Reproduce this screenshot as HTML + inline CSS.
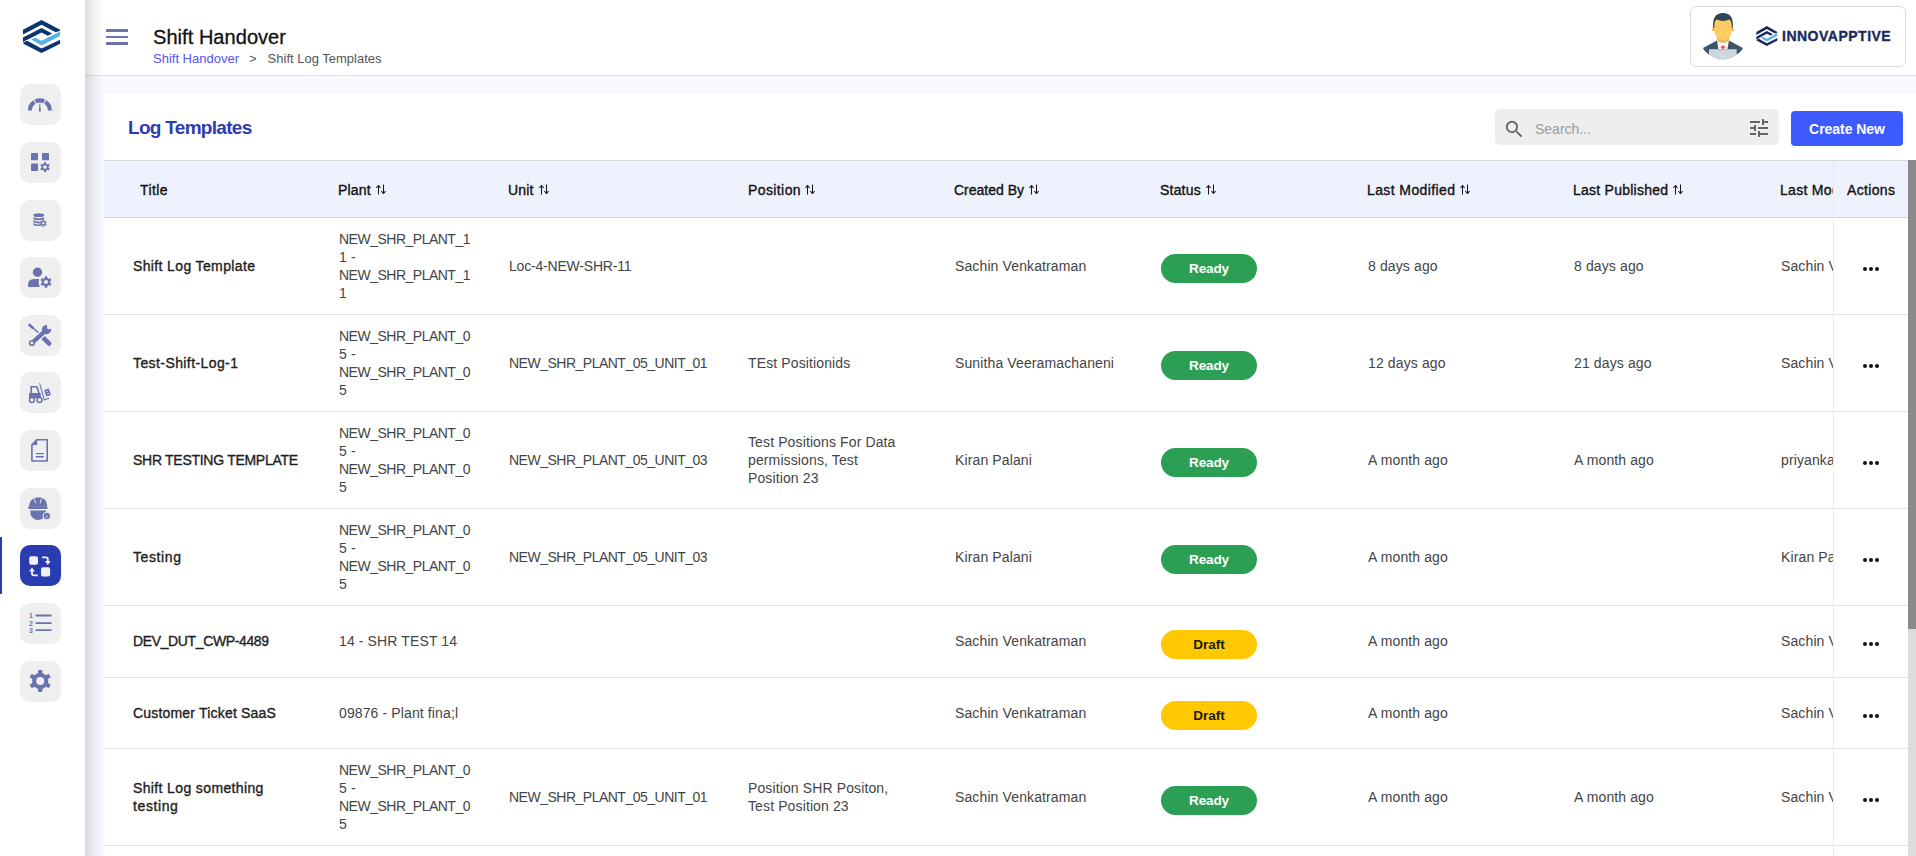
<!DOCTYPE html>
<html><head><meta charset="utf-8">
<style>
*{box-sizing:border-box;margin:0;padding:0}
html,body{width:1916px;height:856px;overflow:hidden;background:#fff;font-family:"Liberation Sans",sans-serif;}
.abs{position:absolute}
#side{position:absolute;left:0;top:0;width:85px;height:856px;background:#fff;z-index:5}
.tile{position:absolute;left:20px;width:41px;height:41px;border-radius:10px;background:#efefef}
.tile svg{position:absolute;left:0;top:0;width:41px;height:41px}
.tile.act{background:#293db0}
#actbar{position:absolute;left:0;top:537px;width:2px;height:57px;background:#293db0}
#shadow{position:absolute;left:85px;top:0;width:19px;height:856px;background:linear-gradient(to right,rgba(40,40,70,0.16),rgba(40,40,70,0.07) 40%,rgba(40,40,70,0.015) 85%,rgba(40,40,70,0));z-index:4}
#hdr{position:absolute;left:85px;top:0;width:1831px;height:76px;background:#fff;border-bottom:1px solid #dedede}
#content{position:absolute;left:85px;top:76px;width:1831px;height:780px;background:#f8f9fe}
#card{position:absolute;left:104px;top:94px;width:1812px;height:762px;background:#fff}
.ham{position:absolute;left:106px;width:22px;height:2.6px;background:#6d73a8;border-radius:0.5px}
#title{position:absolute;left:153px;top:25px;font-size:20px;line-height:24px;color:#111;white-space:nowrap;-webkit-text-stroke:0.3px #111;letter-spacing:0.05px}
#bc{position:absolute;left:153px;top:51px;font-size:13px;line-height:16px;color:#555;white-space:nowrap}
#bc a{color:#5155ee;text-decoration:none}
#userbox{position:absolute;left:1690px;top:6px;width:216px;height:61px;border:1px solid #dcdcdc;border-radius:6px;background:#fff}
#brand{position:absolute;left:1782px;top:28px;font-size:14px;line-height:16px;font-weight:700;color:#1b2a5c;white-space:nowrap;letter-spacing:0.5px;-webkit-text-stroke:0.35px #1b2a5c}
#lt{position:absolute;left:128px;top:116.5px;font-size:19px;line-height:22px;font-weight:700;color:#2c3db2;white-space:nowrap;letter-spacing:-0.7px}
#search{position:absolute;left:1495px;top:109px;width:284px;height:36px;background:#eeeeee;border-radius:5px}
#search .ph{position:absolute;left:40px;top:12px;font-size:14px;line-height:16px;color:#9a9a9a}
#btn{position:absolute;left:1791px;top:111px;width:112px;height:35px;background:#3d5afe;border-radius:4px;color:#fff;font-size:14px;font-weight:700;line-height:37px;text-align:center;letter-spacing:-0.05px}
#thead{position:absolute;left:104px;top:160px;width:1804px;height:58px;background:#eef2fe;border-top:1px solid #d8d8d8;border-bottom:1px solid #d2d5e0}
.h{position:absolute;top:182px;font-size:14px;line-height:16px;font-weight:400;color:#111;white-space:nowrap;letter-spacing:0.3px;-webkit-text-stroke:0.35px #111}
.h svg{display:inline-block;vertical-align:top;margin-left:4px;margin-top:3px}
.rowline{position:absolute;left:104px;width:1804px;height:1px;background:#e2e2e2}
.c{position:absolute;font-size:14px;line-height:18px;white-space:nowrap}
.c.t{font-weight:400;color:#1e1e1e;-webkit-text-stroke:0.35px #1e1e1e}
.c.d{color:#444;letter-spacing:0.12px}
.ns{letter-spacing:-0.5px}
.clip{width:52px;overflow:hidden}
#actcol{position:absolute;left:1833px;top:160px;width:75px;height:696px;background:transparent;z-index:2}
#vline{position:absolute;left:1833px;top:161px;width:1px;height:695px;background:#eaeaea;z-index:3}
.pill{position:absolute;left:1161px;width:96px;height:29px;border-radius:15px;font-size:13.5px;font-weight:700;line-height:29px;text-align:center}
.ready{background:#2ba055;color:#fff;letter-spacing:-0.15px}
.draft{background:#ffc800;color:#1a1a1a;letter-spacing:0px}
.dots{position:absolute;left:1863px;width:16px;height:4px;z-index:3}
.dots i{position:absolute;top:0;width:4px;height:4px;border-radius:2px;background:#111}
.dots i:nth-child(1){left:0}
.dots i:nth-child(2){left:6px}
.dots i:nth-child(3){left:12px}
#sbtrack{position:absolute;left:1908px;top:160px;width:8px;height:696px;background:#dcdcdc;z-index:6}
#sbthumb{position:absolute;left:1908px;top:160px;width:8px;height:469px;background:#8a8a8a;z-index:7}
</style></head><body>

<div id="hdr"></div>
<div id="content"></div>
<div id="card"></div>

<!-- sidebar -->
<div id="side">
  <svg class="abs" style="left:10px;top:10px" width="60" height="60" viewBox="0 0 856 856">
    <polygon fill="#0b3470" points="185,282 450,143 715,280 715,296 652,318 450,210 185,350"/>
    <polygon fill="#0b3470" points="185,392 450,258 600,336 540,366 450,320 185,456"/>
    <polygon fill="#5ab1e6" points="300,422 360,395 450,440 715,305 715,370 450,505"/>
    <polygon fill="#0b3470" points="190,462 245,440 450,548 715,425 715,482 450,612 190,480"/>
  </svg>
  <div class="tile" style="top:84px"><svg viewBox="0 0 41 41"><g fill="#6b72b0">
    <path d="M7.9 26.4 A12 12 0 0 1 13.4 16.3 L15.6 19.7 A8 8 0 0 0 11.9 26.4Z"/>
    <path d="M14.4 15.7 A12 12 0 0 1 25.3 15.7 L23.2 19.2 A8 8 0 0 0 16.5 19.2Z"/>
    <path d="M26.3 16.3 A12 12 0 0 1 31.9 26.4 L27.9 26.4 A8 8 0 0 0 24.1 19.7Z"/>
    <path d="M19.55 19.6 L20.15 19.6 L20.85 26.7 A1 1 0 0 1 18.85 26.7Z"/></g></svg></div>
  <div class="tile" style="top:142px"><svg viewBox="0 0 41 41"><g fill="#6b72b0">
    <rect x="11" y="11" width="7" height="7.2" rx="0.6"/><rect x="22" y="11" width="7" height="7.2" rx="0.6"/><rect x="11" y="21.6" width="7" height="7.3" rx="0.6"/>
    <path fill-rule="evenodd" d="M23.97 21.55 L23.96 20.21 L26.04 20.21 L26.03 21.55 L27.56 22.43 L28.72 21.75 L29.76 23.55 L28.59 24.22 L28.59 25.98 L29.76 26.65 L28.72 28.45 L27.56 27.77 L26.03 28.65 L26.04 29.99 L23.96 29.99 L23.97 28.65 L22.44 27.77 L21.28 28.45 L20.24 26.65 L21.41 25.98 L21.41 24.22 L20.24 23.55 L21.28 21.75 L22.44 22.43Z M26.80 25.10 A1.8 1.8 0 1 0 23.20 25.10 A1.8 1.8 0 1 0 26.80 25.10Z"/></g></svg></div>
  <div class="tile" style="top:200px"><svg viewBox="0 0 41 41"><g fill="#6b72b0">
    <ellipse cx="18.8" cy="15.2" rx="5.4" ry="1.9"/>
    <path d="M13.4 17.3 Q18.8 19.6 24.2 17.3 L24.2 19.2 Q18.8 21.5 13.4 19.2Z"/>
    <path d="M13.4 20.3 Q18.8 22.5 21.5 21.5 L21 23.3 Q16 23.8 13.4 22.3Z"/>
    <path d="M13.4 23.3 Q16.5 24.8 20.5 24.4 L21 25.9 Q16 26.3 13.4 25.2Z"/>
    <path fill-rule="evenodd" d="M22.57 20.80 L22.55 19.78 L24.05 19.78 L24.03 20.80 L25.10 21.42 L25.98 20.89 L26.72 22.19 L25.82 22.68 L25.82 23.92 L26.72 24.41 L25.98 25.71 L25.10 25.18 L24.03 25.80 L24.05 26.82 L22.55 26.82 L22.57 25.80 L21.50 25.18 L20.62 25.71 L19.88 24.41 L20.78 23.92 L20.78 22.68 L19.88 22.19 L20.62 20.89 L21.50 21.42Z M24.50 23.30 A1.2 1.2 0 1 0 22.10 23.30 A1.2 1.2 0 1 0 24.50 23.30Z"/></g></svg></div>
  <div class="tile" style="top:257px"><svg viewBox="0 0 41 41"><g fill="#6b72b0">
    <circle cx="17.5" cy="15.3" r="4.7"/>
    <path d="M8.1 30 L8.1 27 Q8.1 22.2 14 21.9 L19 21.9 Q18 25.5 19.6 30Z"/>
    <path fill-rule="evenodd" d="M24.80 20.87 L24.79 19.33 L27.21 19.33 L27.20 20.87 L28.98 21.90 L30.31 21.12 L31.52 23.21 L30.18 23.97 L30.18 26.03 L31.52 26.79 L30.31 28.88 L28.98 28.10 L27.20 29.13 L27.21 30.67 L24.79 30.67 L24.80 29.13 L23.02 28.10 L21.69 28.88 L20.48 26.79 L21.82 26.03 L21.82 23.97 L20.48 23.21 L21.69 21.12 L23.02 21.90Z M28.00 25.00 A2 2 0 1 0 24.00 25.00 A2 2 0 1 0 28.00 25.00Z"/></g></svg></div>
  <div class="tile" style="top:315px"><svg viewBox="0 0 41 41">
    <g stroke="#6b72b0" stroke-linecap="round" fill="none">
      <path d="M9.6 10 L18.6 17.9" stroke-width="1.4"/>
      <path d="M9.4 9.8 L12.6 12.7" stroke-width="2.5"/>
      <path d="M22.6 22.1 L29.2 28.7" stroke-width="4.6"/>
    </g>
    <path d="M11.9 28 L25.6 15.6" stroke="#efefef" stroke-width="7" stroke-linecap="butt"/>
    <path d="M11.9 28 L25.6 15.6" stroke="#6b72b0" stroke-width="4.2" stroke-linecap="round"/>
    <circle cx="26.6" cy="14.6" r="4.6" fill="#6b72b0"/>
    <path d="M27 9 L32 9 L32 14 Z M25.8 10 L31.4 15.6 L29.3 13.5 Z" fill="#efefef"/>
    <path d="M26.2 8.6 L28.2 8.6 L28.6 12.1 L32.4 12.1 L32.4 14.2 L31.3 14.2 L28.9 12.9 L27.4 11.5 Z" fill="#efefef"/>
    <circle cx="28.9" cy="12.4" r="1.9" fill="#efefef"/>
    <circle cx="11.9" cy="28" r="3.1" fill="#6b72b0"/>
    <circle cx="11.9" cy="28" r="1.45" fill="#efefef"/>
  </svg></div>
  <div class="tile" style="top:372px"><svg viewBox="0 0 41 41">
    <g fill="#6b72b0">
    <path fill-rule="evenodd" d="M10.4 14 L17.4 14 L20 21.2 L20.8 21.2 L20.8 26.3 L9 26.3 L9 21 L10.4 21 Z M12.1 15.6 L12.1 21 L18.2 21 L16.2 15.6 Z"/>
    <path d="M19.1 11.2 L20.1 10.9 L24.7 27.2 L28.8 25.7 L29.2 26.8 L24.2 28.6 L23.8 28.3 Z"/>
    <path d="M24.2 18.1 L28.9 16.6 L30.9 23 L26.2 24.5 Z"/>
    </g>
    <path d="M26.2 19.6 L28.3 18.9 M27 22 L29.1 21.3" stroke="#efefef" stroke-width="0.7"/>
    <circle cx="11.9" cy="28" r="2.5" fill="#efefef" stroke="#6b72b0" stroke-width="1.4"/>
    <circle cx="19.5" cy="28" r="2.5" fill="#efefef" stroke="#6b72b0" stroke-width="1.4"/>
  </svg></div>
  <div class="tile" style="top:430px"><svg viewBox="0 0 41 41"><g fill="#6b72b0">
    <path fill-rule="evenodd" d="M16.5 9 L27.2 9 Q28 9 28 9.8 L28 31 Q28 31.8 27.2 31.8 L11.9 31.8 Q11.1 31.8 11.1 31 L11.1 14.4Z M17.1 10.6 L17.1 15 L12.7 15 L12.7 30.2 L26.4 30.2 L26.4 10.6Z"/>
    <rect x="15.7" y="22.9" width="8.2" height="1.4" rx="0.6"/><rect x="15.7" y="26.1" width="8.2" height="1.4" rx="0.6"/></g></svg></div>
  <div class="tile" style="top:488px"><svg viewBox="0 0 41 41">
    <g fill="#6b72b0">
    <path d="M9 18.6 Q9.6 11 15.3 9.9 L15.8 9.6 L21 9.6 L21.5 9.9 Q27 11 27.2 18.6 Z"/>
    <rect x="8.1" y="18.2" width="19.5" height="2.9" rx="1.4"/>
    <path d="M10.2 22.6 L26 22.6 Q26 31.9 18 31.9 Q10.2 31.9 10.2 22.6 Z"/>
    </g>
    <path d="M14.4 10.8 L15.6 15.4 M21.2 10.8 L20.2 15.4" stroke="#efefef" stroke-width="0.9"/>
    <circle cx="26.8" cy="28" r="3.8" fill="#6b72b0" stroke="#efefef" stroke-width="1"/>
    <path d="M25.6 29.3 L28 26.8 L26.6 29.9 Z" fill="#efefef"/>
  </svg></div>
  <div id="actbar"></div>
  <div class="tile act" style="top:545px"><svg viewBox="0 0 41 41">
    <g fill="#f1f1f3">
    <rect x="9.2" y="11.3" width="8.8" height="8.5" rx="2"/>
    <rect x="21" y="22.3" width="9.1" height="9.1" rx="2"/>
    <path d="M24.9 16 L30.7 16 L27.8 19.9Z"/>
    <path d="M9.1 26.4 L14.9 26.4 L12 22.5Z"/>
    </g>
    <g fill="none" stroke="#f1f1f3" stroke-width="1.9">
    <path d="M22 12.4 H26 Q27.8 12.4 27.8 14.2 V16.5"/>
    <path d="M17.8 30.4 H13.8 Q12 30.4 12 28.6 V26"/>
    </g></svg></div>
  <div class="tile" style="top:603px"><svg viewBox="0 0 41 41"><g fill="#6b72b0">
    <rect x="15.4" y="11.6" width="16.4" height="1.8" rx="0.9"/>
    <rect x="15.4" y="19.2" width="16.4" height="1.8" rx="0.9"/>
    <rect x="15.4" y="26.2" width="16.4" height="1.8" rx="0.9"/>
    <text x="8.9" y="15" font-family="Liberation Sans" font-weight="700" font-size="7">1</text>
    <text x="8.9" y="22.5" font-family="Liberation Sans" font-weight="700" font-size="7">2</text>
    <text x="8.9" y="29.9" font-family="Liberation Sans" font-weight="700" font-size="7">3</text></g></svg></div>
  <div class="tile" style="top:661px"><svg viewBox="0 0 41 41"><g fill="#6b72b0">
    <path fill-rule="evenodd" d="M18.11 11.97 L18.10 9.00 L22.30 9.00 L22.29 11.97 L26.11 14.17 L28.68 12.68 L30.78 16.32 L28.20 17.79 L28.20 22.21 L30.78 23.68 L28.68 27.32 L26.11 25.83 L22.29 28.03 L22.30 31.00 L18.10 31.00 L18.11 28.03 L14.29 25.83 L11.72 27.32 L9.62 23.68 L12.20 22.21 L12.20 17.79 L9.62 16.32 L11.72 12.68 L14.29 14.17Z M24.20 20.00 A4 4 0 1 0 16.20 20.00 A4 4 0 1 0 24.20 20.00Z"/></g></svg></div>
</div>
<div id="shadow"></div>

<!-- header -->
<div class="ham" style="top:29px"></div>
<div class="ham" style="top:35.6px"></div>
<div class="ham" style="top:42.2px"></div>
<div id="title">Shift Handover</div>
<div id="bc"><a>Shift Handover</a><span style="margin:0 11px 0 10px">&gt;</span>Shift Log Templates</div>
<div id="userbox"></div>
<svg class="abs" style="left:1700px;top:10px" width="46" height="52" viewBox="0 0 46 52">
  <path d="M3.0 38.1 L17.0 30.6 L28.9 30.6 L42.9 38.1 A20.5 12.5 0 0 1 3.0 38.1 Z" fill="#3e5568"/>
  <path d="M9.0 39.3 L36.7 39.3 L36.7 44.5 Q31.0 49.8 22.8 49.8 Q14.5 49.8 9.0 44.5 Z" fill="#cdd5df"/>
  <circle cx="22.90000000000009" cy="46.6" r="1.4" fill="#e3e8ee"/>
  <path d="M17.0 30.6 L28.9 30.6 L27.5 39.3 L18.4 39.3 Z" fill="#f4f4f6"/>
  <rect x="17" y="25" width="11.9" height="5.6" fill="#f0b441"/>
  <path d="M17.0 30.6 Q22.9 35.0 28.9 30.6 Z" fill="#f0b441"/>
  <path d="M21.4 35.8 L24.4 35.8 L25.0 37.8 L22.9 39.3 L20.8 37.8 Z" fill="#ee5a4f"/>
  <circle cx="13.599999999999909" cy="19.6" r="1.7" fill="#f0b441"/>
  <circle cx="32.40000000000009" cy="19.6" r="1.7" fill="#f0b441"/>
  <path d="M14.0 7.0 L14.0 19.0 Q14.8 30.4 23.0 30.4 Q31.2 30.4 32.0 19.0 L32.0 7.0 Z" fill="#fccb62"/>
  <path d="M13.1 18.0 Q12.0 3.1 23.0 3.1 Q34.0 3.1 32.8 18.0 L31.8 18.0 Q31.6 11.0 29.5 9.6 Q23.0 12.3 16.5 9.6 Q14.4 11.0 14.2 18.0 Z" fill="#2e4657"/>
</svg>
<svg class="abs" style="left:1748.7px;top:19.9px" width="34" height="36.5" viewBox="0 0 856 856" preserveAspectRatio="none">
  <polygon fill="#16295a" points="185,282 450,143 715,280 715,296 652,318 450,210 185,350"/>
  <polygon fill="#16295a" points="185,392 450,258 600,336 540,366 450,320 185,456"/>
  <polygon fill="#5ab1e6" points="300,422 360,395 450,440 715,305 715,370 450,505"/>
  <polygon fill="#16295a" points="190,462 245,440 450,548 715,425 715,482 450,612 190,480"/>
</svg>
<div id="brand">INNOVAPPTIVE</div>

<!-- card header -->
<div id="lt">Log Templates</div>
<div id="search">
  <svg class="abs" style="left:7.7px;top:9.2px" width="22.6" height="22.6" viewBox="0 0 24 24"><path fill="#666" d="M15.5 14h-.79l-.28-.27A6.47 6.47 0 0 0 16 9.5 6.5 6.5 0 1 0 9.5 16c1.61 0 3.09-.59 4.23-1.57l.27.28v.79l5 4.99L20.49 19l-4.99-5zm-6 0C7.01 14 5 11.99 5 9.5S7.01 5 9.5 5 14 7.01 14 9.5 11.99 14 9.5 14z"/></svg>
  <div class="ph">Search...</div>
  <svg class="abs" style="left:252px;top:7px" width="24" height="24" viewBox="0 0 24 24"><path fill="#666" d="M3 17v2h6v-2H3zM3 5v2h10V5H3zm10 16v-2h8v-2h-8v-2h-2v6h2zM7 9v2H3v2h4v2h2V9H7zm14 4v-2H11v2h10zm-6-4h2V7h4V5h-4V3h-2v6z"/></svg>
</div>
<div id="btn">Create New</div>

<!-- table -->
<div id="thead"></div>
<div class="h" style="left:140px;letter-spacing:0.4px">Title</div>
<div class="h" style="left:338px;letter-spacing:0.2px">Plant</div>
<div class="h" style="left:508px;letter-spacing:0.2px">Unit</div>
<div class="h" style="left:748px;letter-spacing:0.4px">Position</div>
<div class="h" style="left:954px;letter-spacing:0.0px">Created By</div>
<div class="h" style="left:1160px;letter-spacing:0.2px">Status</div>
<div class="h" style="left:1367px;letter-spacing:0.4px">Last Modified</div>
<div class="h" style="left:1573px;letter-spacing:0.25px">Last Published</div>
<div class="h" style="left:1780px;width:53px;overflow:hidden">Last Modified By</div>
<div class="h" style="left:1847px;letter-spacing:0.35px">Actions</div>
<svg class="abs" style="left:376px;top:183.5px" width="10" height="11" viewBox="0 0 10 11"><path d="M2.5 10.5V1.6M0.4 3.8L2.5 1.5 4.6 3.8M7.5 0.5V9.4M5.4 7.2L7.5 9.5 9.6 7.2" fill="none" stroke="#1a1a1a" stroke-width="1.05"/></svg>
<svg class="abs" style="left:539px;top:183.5px" width="10" height="11" viewBox="0 0 10 11"><path d="M2.5 10.5V1.6M0.4 3.8L2.5 1.5 4.6 3.8M7.5 0.5V9.4M5.4 7.2L7.5 9.5 9.6 7.2" fill="none" stroke="#1a1a1a" stroke-width="1.05"/></svg>
<svg class="abs" style="left:805px;top:183.5px" width="10" height="11" viewBox="0 0 10 11"><path d="M2.5 10.5V1.6M0.4 3.8L2.5 1.5 4.6 3.8M7.5 0.5V9.4M5.4 7.2L7.5 9.5 9.6 7.2" fill="none" stroke="#1a1a1a" stroke-width="1.05"/></svg>
<svg class="abs" style="left:1029px;top:183.5px" width="10" height="11" viewBox="0 0 10 11"><path d="M2.5 10.5V1.6M0.4 3.8L2.5 1.5 4.6 3.8M7.5 0.5V9.4M5.4 7.2L7.5 9.5 9.6 7.2" fill="none" stroke="#1a1a1a" stroke-width="1.05"/></svg>
<svg class="abs" style="left:1206px;top:183.5px" width="10" height="11" viewBox="0 0 10 11"><path d="M2.5 10.5V1.6M0.4 3.8L2.5 1.5 4.6 3.8M7.5 0.5V9.4M5.4 7.2L7.5 9.5 9.6 7.2" fill="none" stroke="#1a1a1a" stroke-width="1.05"/></svg>
<svg class="abs" style="left:1460px;top:183.5px" width="10" height="11" viewBox="0 0 10 11"><path d="M2.5 10.5V1.6M0.4 3.8L2.5 1.5 4.6 3.8M7.5 0.5V9.4M5.4 7.2L7.5 9.5 9.6 7.2" fill="none" stroke="#1a1a1a" stroke-width="1.05"/></svg>
<svg class="abs" style="left:1673px;top:183.5px" width="10" height="11" viewBox="0 0 10 11"><path d="M2.5 10.5V1.6M0.4 3.8L2.5 1.5 4.6 3.8M7.5 0.5V9.4M5.4 7.2L7.5 9.5 9.6 7.2" fill="none" stroke="#1a1a1a" stroke-width="1.05"/></svg>
<div id="vline"></div>

<div class="rowline" style="top:314px"></div>
<div class="c t" style="left:133px;top:257.0px;"><span style="letter-spacing:0.37px">Shift Log Template</span></div>
<div class="c d" style="left:339px;top:230.0px;"><span class="ns">NEW_SHR_PLANT_1</span><br>1 -<br><span class="ns">NEW_SHR_PLANT_1</span><br>1</div>
<div class="c d" style="left:509px;top:257.0px;"><span style="letter-spacing:-0.2px">Loc-4-NEW-SHR-11</span></div>
<div class="c d" style="left:955px;top:257.0px;">Sachin Venkatraman</div>
<div class="c d" style="left:1368px;top:257.0px;">8 days ago</div>
<div class="c d" style="left:1574px;top:257.0px;">8 days ago</div>
<div class="c d clip" style="left:1781px;top:257.0px">Sachin Venkatraman</div>
<div class="pill ready" style="top:254.0px">Ready</div>
<div class="dots" style="top:267.0px"><i></i><i></i><i></i></div>
<div class="rowline" style="top:411px"></div>
<div class="c t" style="left:133px;top:354.0px;"><span style="letter-spacing:0.41px">Test-Shift-Log-1</span></div>
<div class="c d" style="left:339px;top:327.0px;"><span class="ns">NEW_SHR_PLANT_0</span><br>5 -<br><span class="ns">NEW_SHR_PLANT_0</span><br>5</div>
<div class="c d" style="left:509px;top:354.0px;"><span class="ns">NEW_SHR_PLANT_05_UNIT_01</span></div>
<div class="c d" style="left:748px;top:354.0px;">TEst Positionids</div>
<div class="c d" style="left:955px;top:354.0px;">Sunitha Veeramachaneni</div>
<div class="c d" style="left:1368px;top:354.0px;">12 days ago</div>
<div class="c d" style="left:1574px;top:354.0px;">21 days ago</div>
<div class="c d clip" style="left:1781px;top:354.0px">Sachin Venkatraman</div>
<div class="pill ready" style="top:351.0px">Ready</div>
<div class="dots" style="top:364.0px"><i></i><i></i><i></i></div>
<div class="rowline" style="top:508px"></div>
<div class="c t" style="left:133px;top:451.0px;"><span style="letter-spacing:-0.28px">SHR TESTING TEMPLATE</span></div>
<div class="c d" style="left:339px;top:424.0px;"><span class="ns">NEW_SHR_PLANT_0</span><br>5 -<br><span class="ns">NEW_SHR_PLANT_0</span><br>5</div>
<div class="c d" style="left:509px;top:451.0px;"><span class="ns">NEW_SHR_PLANT_05_UNIT_03</span></div>
<div class="c d" style="left:748px;top:433.0px;">Test Positions For Data<br>permissions, Test<br>Position 23</div>
<div class="c d" style="left:955px;top:451.0px;">Kiran Palani</div>
<div class="c d" style="left:1368px;top:451.0px;">A month ago</div>
<div class="c d" style="left:1574px;top:451.0px;">A month ago</div>
<div class="c d clip" style="left:1781px;top:451.0px">priyanka</div>
<div class="pill ready" style="top:448.0px">Ready</div>
<div class="dots" style="top:461.0px"><i></i><i></i><i></i></div>
<div class="rowline" style="top:605px"></div>
<div class="c t" style="left:133px;top:548.0px;"><span style="letter-spacing:0.60px">Testing</span></div>
<div class="c d" style="left:339px;top:521.0px;"><span class="ns">NEW_SHR_PLANT_0</span><br>5 -<br><span class="ns">NEW_SHR_PLANT_0</span><br>5</div>
<div class="c d" style="left:509px;top:548.0px;"><span class="ns">NEW_SHR_PLANT_05_UNIT_03</span></div>
<div class="c d" style="left:955px;top:548.0px;">Kiran Palani</div>
<div class="c d" style="left:1368px;top:548.0px;">A month ago</div>
<div class="c d clip" style="left:1781px;top:548.0px">Kiran Palani</div>
<div class="pill ready" style="top:545.0px">Ready</div>
<div class="dots" style="top:558.0px"><i></i><i></i><i></i></div>
<div class="rowline" style="top:677px"></div>
<div class="c t" style="left:133px;top:632.0px;"><span style="letter-spacing:-0.37px">DEV_DUT_CWP-4489</span></div>
<div class="c d" style="left:339px;top:632.0px;">14 - SHR TEST 14</div>
<div class="c d" style="left:955px;top:632.0px;">Sachin Venkatraman</div>
<div class="c d" style="left:1368px;top:632.0px;">A month ago</div>
<div class="c d clip" style="left:1781px;top:632.0px">Sachin Venkatraman</div>
<div class="pill draft" style="top:629.5px">Draft</div>
<div class="dots" style="top:641.5px"><i></i><i></i><i></i></div>
<div class="rowline" style="top:748px"></div>
<div class="c t" style="left:133px;top:704.0px;"><span style="letter-spacing:0.19px">Customer Ticket SaaS</span></div>
<div class="c d" style="left:339px;top:704.0px;">09876 - Plant fina;l</div>
<div class="c d" style="left:955px;top:704.0px;">Sachin Venkatraman</div>
<div class="c d" style="left:1368px;top:704.0px;">A month ago</div>
<div class="c d clip" style="left:1781px;top:704.0px">Sachin Venkatraman</div>
<div class="pill draft" style="top:701.0px">Draft</div>
<div class="dots" style="top:714.0px"><i></i><i></i><i></i></div>
<div class="rowline" style="top:845px"></div>
<div class="c t" style="left:133px;top:779.0px;"><span style="letter-spacing:0.37px">Shift Log something</span><br><span style="letter-spacing:0.60px">testing</span></div>
<div class="c d" style="left:339px;top:761.0px;"><span class="ns">NEW_SHR_PLANT_0</span><br>5 -<br><span class="ns">NEW_SHR_PLANT_0</span><br>5</div>
<div class="c d" style="left:509px;top:788.0px;"><span class="ns">NEW_SHR_PLANT_05_UNIT_01</span></div>
<div class="c d" style="left:748px;top:779.0px;">Position SHR Positon,<br>Test Position 23</div>
<div class="c d" style="left:955px;top:788.0px;">Sachin Venkatraman</div>
<div class="c d" style="left:1368px;top:788.0px;">A month ago</div>
<div class="c d" style="left:1574px;top:788.0px;">A month ago</div>
<div class="c d clip" style="left:1781px;top:788.0px">Sachin Venkatraman</div>
<div class="pill ready" style="top:786.0px">Ready</div>
<div class="dots" style="top:798.0px"><i></i><i></i><i></i></div>
<div class="rowline" style="top:942px"></div>


<div id="sbtrack"></div>
<div id="sbthumb"></div>
</body></html>
